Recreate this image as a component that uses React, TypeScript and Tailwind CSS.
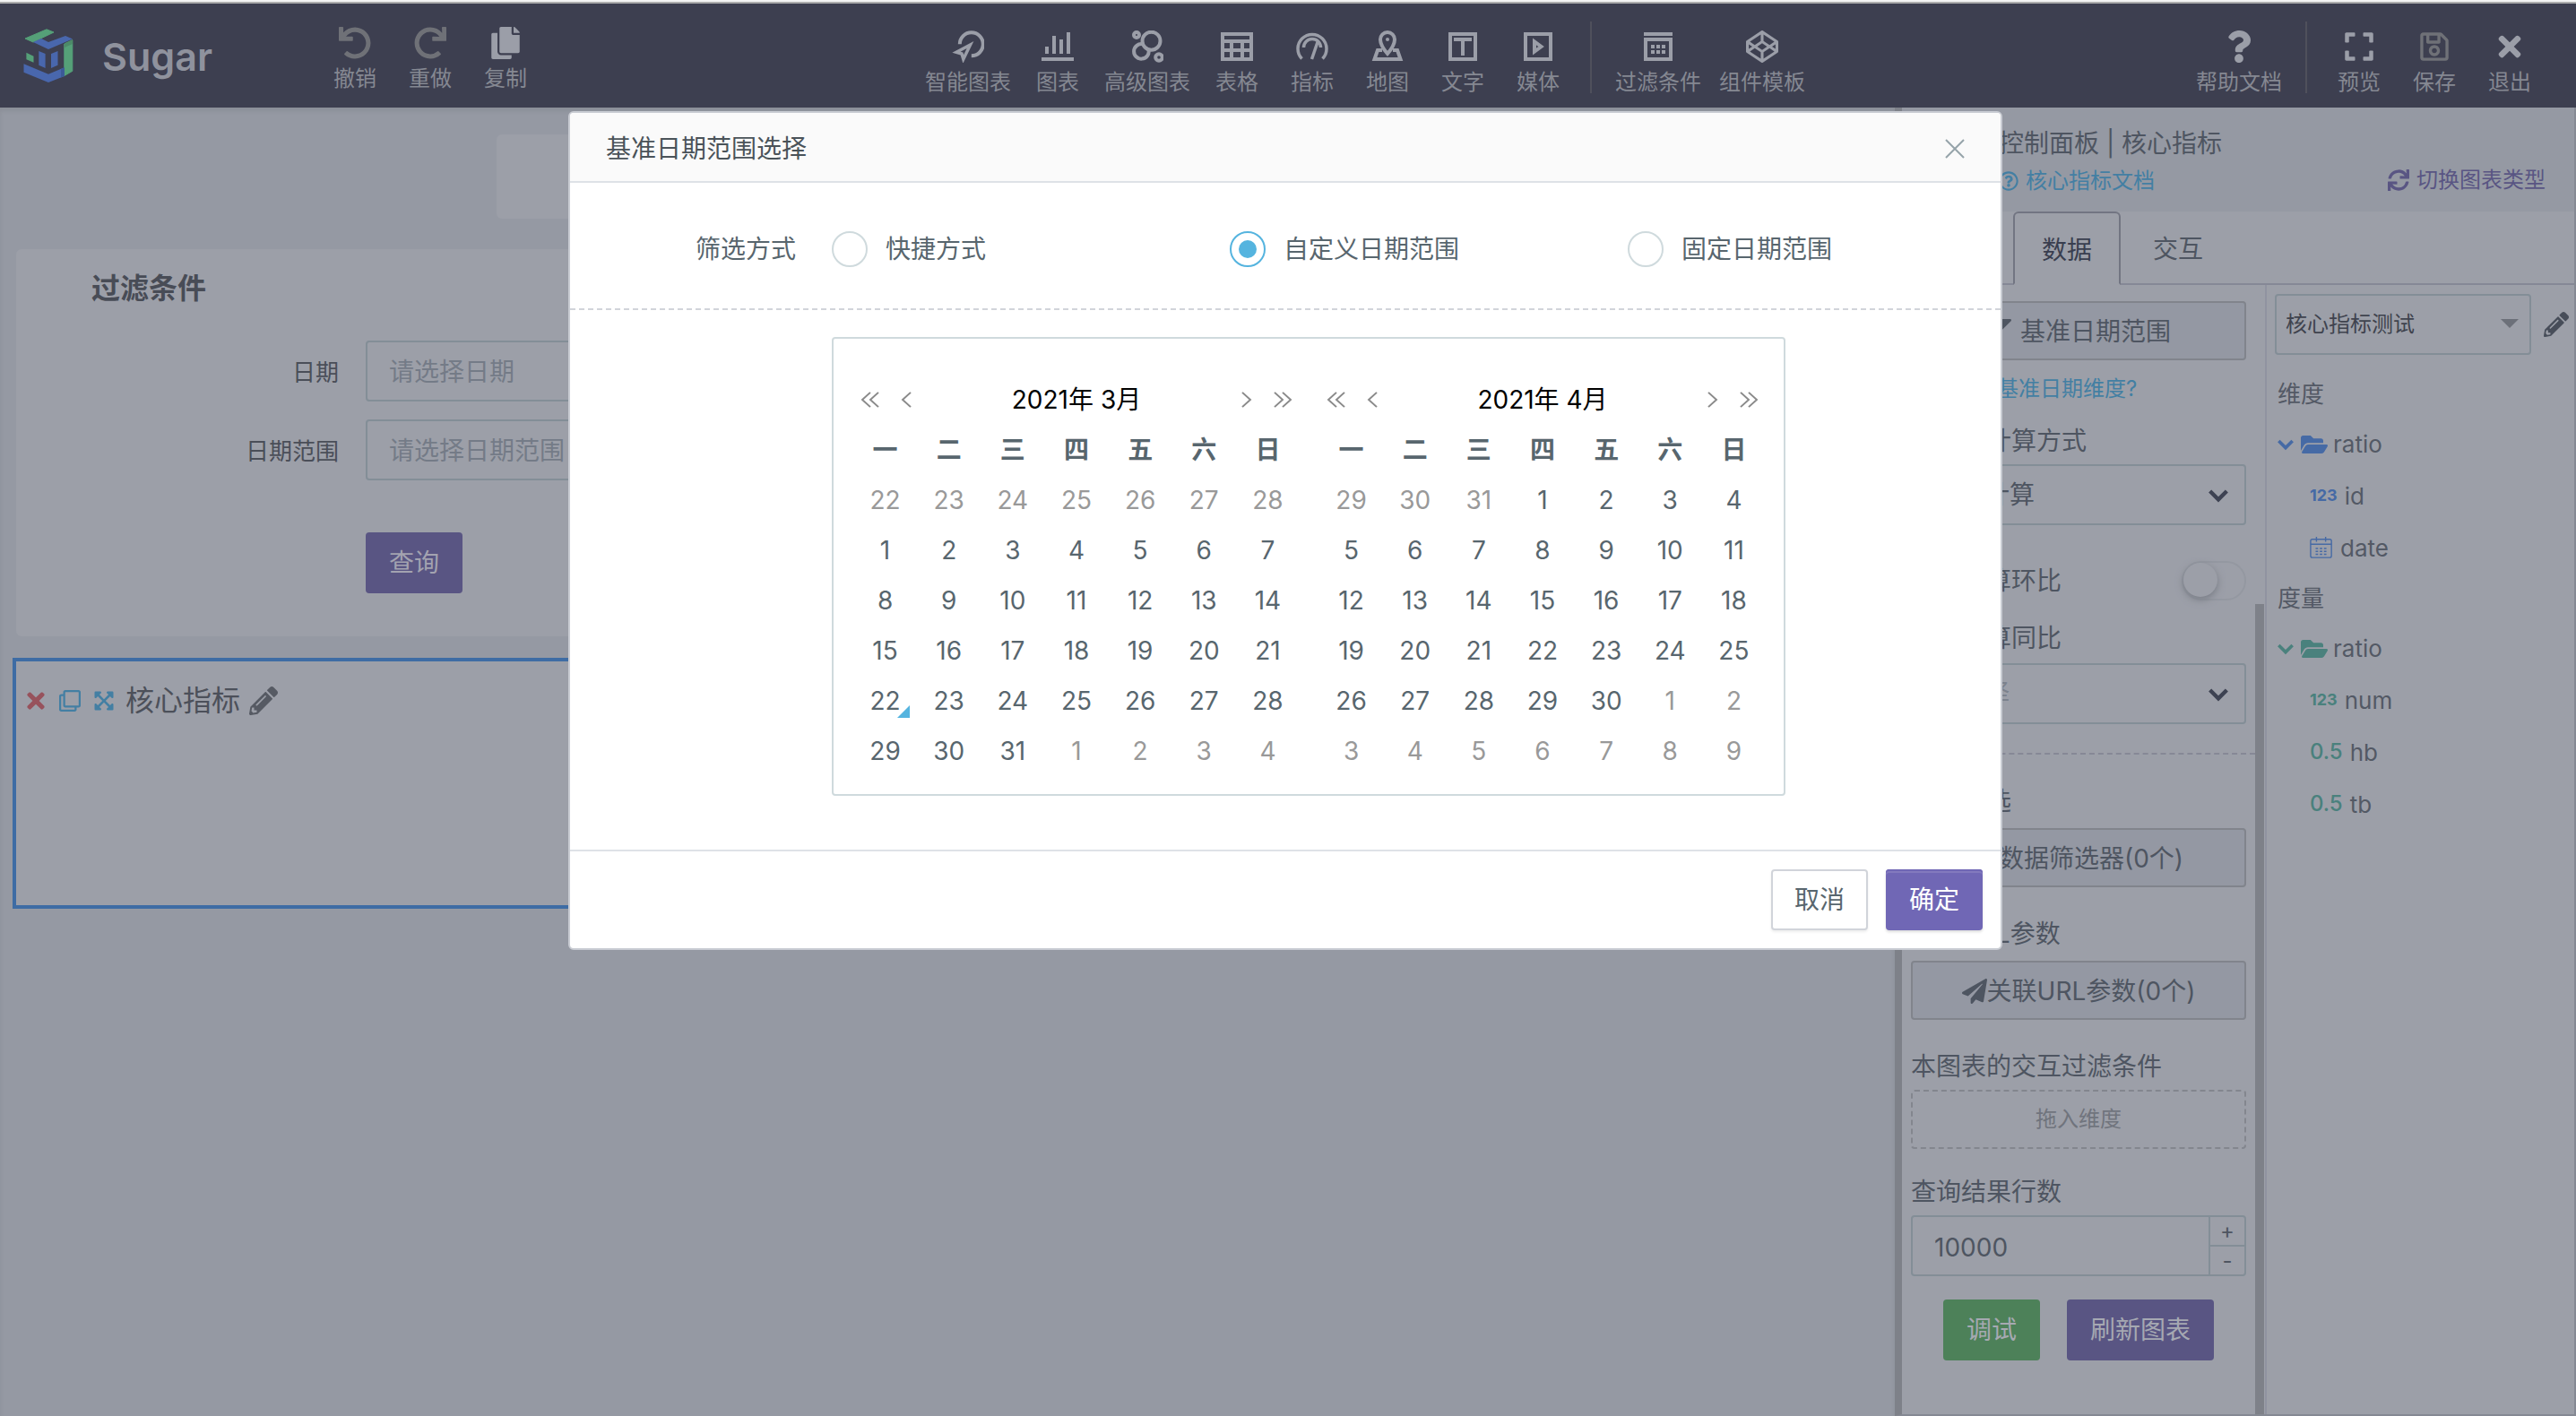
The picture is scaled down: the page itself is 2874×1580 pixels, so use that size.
import React from 'react';
import {
  FaCodepen,
  FaCopy,
  FaExpand,
  FaExpandArrowsAlt,
  FaFilter,
  FaFolderOpen,
  FaPaperPlane,
  FaPencilAlt,
  FaQuestion,
  FaRedo,
  FaRegClone,
  FaRegQuestionCircle,
  FaRegSave,
  FaSync,
  FaTimes,
  FaUndo,
} from 'react-icons/fa';

type Kids = { children?: React.ReactNode };

/* ---------- drawings ---------- */

function Logo() {
  return (
    <svg width="56" height="60" viewBox="0 0 56 60" aria-hidden="true">
      <g strokeLinejoin="round" strokeWidth="1">
        <path d="M2 11 26 .8l8 3.2-23 11z" fill="#55a078" stroke="#55a078" />
        <path d="M11 15l9-4 8 4 19-7 8 3.500L28 23z" fill="#4967ad" />
        <path d="M45.800 17l9-4.200v34.500l-9 5.200z" fill="#55a078" stroke="#55a078" />
        <path d="M46 16.500l9-4.500v5l-9 4z" fill="#4c8a68" />
        <path d="M3.400 26.700l8.100 4v7l-8.100-3.400z" fill="#55a078" />
        <path d="M17.300 25l7.300 3v16l-7.300-3.300zM38.500 25L31 28v16l7.500-3.300z" fill="#4967ad" />
        <path d="M.5 39.300L28 50.700l17.800-7.400V53L28 60 .5 48.700z" fill="#4967ad" />
        <path d="M42 45l3.800-1.700V53L42 54.500z" fill="#3b5a96" />
      </g>
    </svg>
  );
}

function Svg({ children }: Kids) {
  return (
    <svg width="36" height="36" viewBox="0 0 36 36" fill="none" stroke="currentColor" strokeWidth="4" aria-hidden="true">
      {children}
    </svg>
  );
}

const SmartIcon = () => (
  <Svg>
    <path d="M8.800 15.300A13 13 0 1 1 21.800 28.300" />
    <path d="M20.500 16L5 24.300l6 1.700 1.800 6z" strokeWidth="3.500" />
  </Svg>
);
const ChartIcon = () => (
  <Svg>
    <path d="M6 18v8M14 6v20M22 10v16M30 2v24M0 32h36" />
  </Svg>
);
const AdvancedIcon = () => (
  <Svg>
    <circle cx="6" cy="5" r="3" />
    <circle cx="22.500" cy="11.700" r="10" />
    <path d="M13 15.200A8.300 8.300 0 1 0 19.500 21.500" />
    <circle cx="31" cy="30" r="3.800" />
  </Svg>
);
const TableIcon = () => (
  <Svg>
    <path
      stroke="none"
      fill="currentColor"
      fillRule="evenodd"
      d="M0 2h36v32H0zM4 6v4h28V6zM4 14v6h6v-6zM14 14v6h8v-6zM26 14v6h6v-6zM4 24v6h6v-6zM14 24v6h8v-6zM26 24v6h6v-6z"
    />
  </Svg>
);
const GaugeIcon = () => (
  <Svg>
    <path d="M6.500 31.500A16 16 0 1 1 29.500 31.500" strokeWidth="3.500" />
    <path d="M8.500 19a9.500 9.500 0 0 1 19 0" strokeWidth="3.500" />
    <path d="M17.500 32L24 13" strokeWidth="3.500" />
  </Svg>
);
const MapIcon = () => (
  <Svg>
    <path d="M18 26C12 19 10 15 10 10a8 8 0 0 1 16 0c0 5-2 9-8 16z" />
    <circle cx="18" cy="10" r="2" fill="currentColor" stroke="none" />
    <path d="M12 22H7L3.500 32h29L29 22h-5" />
  </Svg>
);
const TextIcon = () => (
  <Svg>
    <path d="M4 4h28v28H4zM8 10h20M18 10v18" />
  </Svg>
);
const MediaIcon = () => (
  <Svg>
    <path d="M4 4h28v28H4z" />
    <path d="M14 12.500v11l7.500-5.500z" />
  </Svg>
);
const FilterFormIcon = () => (
  <Svg>
    <path d="M2 4h32M4 10h28v22H4zM10 18h4M16 18h4M22 18h4M10 24h4M16 24h4M22 24h4" />
  </Svg>
);

function Chevron({ size }: { size: number }) {
  return (
    <svg width={size} height={size} viewBox="0 0 20 20" fill="none" stroke="currentColor" strokeWidth="4" aria-hidden="true">
      <path d="M1.500 5.500L10 14l8.500-8.500" />
    </svg>
  );
}

function CalendarGlyph() {
  return (
    <svg width="26" height="28" viewBox="0 0 28 28" fill="none" stroke="currentColor" strokeWidth="1.500" aria-hidden="true">
      <rect x="1" y="4" width="25" height="22" rx="2" />
      <path d="M1 10h25M8 1v6M19 1v6" />
      <path d="M7 15h14M7 18.500h14M7 22h14" strokeDasharray="3 2" />
    </svg>
  );
}

function Arrow({ dir, double }: { dir: 'left' | 'right'; double?: boolean }) {
  const left = double ? 'M11 2L2 11l9 9M20 2l-9 9 9 9' : 'M12 2L3 11l9 9';
  const right = double ? 'M2 2l9 9-9 9M11 2l9 9-9 9' : 'M2 2l9 9-9 9';
  return (
    <svg width={double ? 22 : 14} height="20" viewBox={double ? '0 0 22 22' : '0 0 14 22'} preserveAspectRatio="none" fill="none" stroke="currentColor" strokeWidth="2" aria-hidden="true">
      <path d={dir === 'left' ? left : right} />
    </svg>
  );
}

/* ---------- top bar ---------- */

function Tool({ icon, label, muted }: { icon: React.ReactNode; label: string; muted?: boolean }) {
  return (
    <button type="button" className="flex min-w-21 flex-col items-center gap-1 px-2.5 pt-4 text-2xl leading-9 text-[#858892]">
      <span className={muted ? 'flex h-9 items-center text-[#6f7177]' : 'flex h-9 items-center text-[#9b9ea8]'}>{icon}</span>
      {label}
    </button>
  );
}

const Divider = () => <span className="mx-4 h-20 w-0.5 bg-[#4f505b]" />;

function TopBar() {
  return (
    <header className="flex h-29 items-center justify-between bg-[#3d3f50] pr-8 pl-6.5">
      <div className="flex items-center">
        <Logo />
        <span className="ml-8 w-60 pt-0.5 text-[43px] leading-none font-semibold text-[#8f929d]">Sugar</span>
        <div className="flex pb-1">
          <Tool icon={<FaUndo size={36} />} label="撤销" muted />
          <Tool icon={<FaRedo size={36} />} label="重做" muted />
          <Tool icon={<FaCopy size={36} />} label="复制" />
        </div>
      </div>
      <nav className="flex items-center pt-1">
        <Tool icon={<SmartIcon />} label="智能图表" />
        <Tool icon={<ChartIcon />} label="图表" />
        <Tool icon={<AdvancedIcon />} label="高级图表" />
        <Tool icon={<TableIcon />} label="表格" />
        <Tool icon={<GaugeIcon />} label="指标" />
        <Tool icon={<MapIcon />} label="地图" />
        <Tool icon={<TextIcon />} label="文字" />
        <Tool icon={<MediaIcon />} label="媒体" />
        <Divider />
        <Tool icon={<FilterFormIcon />} label="过滤条件" />
        <Tool icon={<FaCodepen size={36} />} label="组件模板" />
      </nav>
      <div className="flex items-center pt-1">
        <Tool icon={<FaQuestion size={36} />} label="帮助文档" />
        <Divider />
        <Tool icon={<FaExpand size={36} />} label="预览" />
        <Tool icon={<FaRegSave size={36} />} label="保存" muted />
        <Tool icon={<FaTimes size={36} />} label="退出" />
      </div>
    </header>
  );
}

/* ---------- canvas ---------- */

function FilterField({ id, label, placeholder }: { id: string; label: string; placeholder: string }) {
  return (
    <div className="mb-5 flex items-center">
      <label htmlFor={id} className="w-90 pt-0.5 pr-7.5 text-right text-[26px] text-[#4a4e58]">
        {label}
      </label>
      <input
        id={id}
        placeholder={placeholder}
        className="h-17 w-120 rounded border-2 border-[#838e97] bg-transparent px-6 pt-0.5 text-[28px] placeholder:text-[#747b87]"
      />
    </div>
  );
}

function Canvas() {
  return (
    <main className="flex-1 shadow-[inset_0_4px_4px_#8b8f98]">
      <div className="mx-auto mt-7.5 h-23.5 w-[1006px] rounded-md bg-[#9c9fa8]" />
      <section className="mx-4.5 mt-8.5 h-108 rounded-md bg-[#9c9fa8] pt-6">
        <h2 className="ml-21 text-[32px] leading-10 font-bold text-[#484c56]">过滤条件</h2>
        <form className="mt-9.5 pl-[30px]">
          <FilterField id="date" label="日期" placeholder="请选择日期" />
          <FilterField id="range" label="日期范围" placeholder="请选择日期范围" />
          <button type="button" className="mt-9.5 ml-90 h-17 w-27 rounded bg-[#595583] text-[28px] text-[#a3a3b0]">
            查询
          </button>
        </form>
      </section>
      <section className="mx-3.5 mt-6 h-70 border-4 border-[#3e6ca4] bg-[#9c9fa8]">
        <div className="flex items-center pt-6 pl-2">
          <FaTimes size={28} className="text-[#97525c]" />
          <FaRegClone size={24} className="ml-3 text-[#437fa3]" />
          <FaExpandArrowsAlt size={24} className="ml-3.5 text-[#437fa3]" />
          <h2 className="ml-3 text-[32px] leading-10 text-[#4c505a]">核心指标</h2>
          <FaPencilAlt size={32} className="ml-2.5 text-[#565a63]" />
        </div>
      </section>
    </main>
  );
}

/* ---------- right panel ---------- */

const FieldLabel = ({ children, htmlFor }: Kids & { htmlFor?: string }) => (
  <label htmlFor={htmlFor} className="block leading-10">
    {children}
  </label>
);

function PanelButton({ icon, children }: Kids & { icon: React.ReactNode }) {
  return (
    <button type="button" className="flex h-16.5 w-full items-center justify-center rounded border-2 border-[#81848c] bg-[#9498a3] pt-0.5">
      {icon}
      {children}
    </button>
  );
}

function PanelSelect({ id, value, muted }: { id: string; value: string; muted?: boolean }) {
  return (
    <div className="relative">
      <select
        id={id}
        className={
          muted
            ? 'h-17 w-full appearance-none rounded border-2 border-[#838e97] bg-transparent px-6 text-[#7c828d]'
            : 'h-17 w-full appearance-none rounded border-2 border-[#838e97] bg-transparent px-6'
        }
      >
        <option>{value}</option>
      </select>
      <span className="pointer-events-none absolute top-6 right-5 text-[#3d4252]">
        <Chevron size={22} />
      </span>
    </div>
  );
}

function DataSettings() {
  return (
    <div className="w-98.5 px-2.5 pt-4.5">
      <PanelButton icon={<FaFilter size={28} className="mr-2.5" />}>基准日期范围</PanelButton>
      <a href="#base-date" className="mt-3 block text-2xl leading-10 text-[#437fa3]">
        如何设置基准日期维度?
      </a>
      <div className="mt-4.5 mb-1.5">
        <FieldLabel htmlFor="calc">环同比计算方式</FieldLabel>
      </div>
      <PanelSelect id="calc" value="自动计算" />
      <div className="mt-10 flex h-11 items-center justify-between">
        <FieldLabel htmlFor="hb">是否计算环比</FieldLabel>
        <input
          id="hb"
          type="checkbox"
          role="switch"
          className="h-11 w-18 appearance-none rounded-full border-2 border-[#9498a1] before:block before:size-9.5 before:rounded-full before:bg-[#9c9fa8] before:shadow-[0_3px_8px_#777b84] before:content-['']"
        />
      </div>
      <div className="mt-5.5 mb-2">
        <FieldLabel htmlFor="tb">是否计算同比</FieldLabel>
      </div>
      <PanelSelect id="tb" value="请选择" muted />
      <hr className="-mx-2.5 mt-8 mb-8 border-t-2 border-dashed border-[#868896]" />
      <div className="pb-2.5">
        <FieldLabel>数据筛选</FieldLabel>
      </div>
      <PanelButton icon={<FaFilter size={24} className="mr-1" />}>数据筛选器(0个)</PanelButton>
      <div className="mt-8 mb-2.5">
        <FieldLabel>关联URL参数</FieldLabel>
      </div>
      <PanelButton icon={<FaPaperPlane size={28} />}>关联URL参数(0个)</PanelButton>
      <div className="mt-8 mb-1.5">
        <FieldLabel>本图表的交互过滤条件</FieldLabel>
      </div>
      <div className="flex h-16.5 items-center justify-center rounded-sm border-2 border-dashed border-[#83868e] text-2xl text-[#70747d]">
        拖入维度
      </div>
      <div className="mt-7 mb-1.5">
        <FieldLabel htmlFor="rows">查询结果行数</FieldLabel>
      </div>
      <div className="flex h-17 rounded border-2 border-[#838e97]">
        <input id="rows" defaultValue="10000" className="min-w-0 flex-1 bg-transparent px-6 pt-1" />
        <div className="flex w-10 flex-col border-l-2 border-[#838e97] text-2xl leading-7">
          <button type="button" aria-label="增加" className="flex-1 border-b-2 border-[#838e97]">
            +
          </button>
          <button type="button" aria-label="减少" className="flex-1">
            -
          </button>
        </div>
      </div>
      <div className="mt-6.5 flex justify-center gap-7.5 text-[#a6a9b2]">
        <button type="button" className="h-17 rounded bg-[#4d8159] px-6.5">
          调试
        </button>
        <button type="button" className="h-17 rounded bg-[#595583] px-6.5">
          刷新图表
        </button>
      </div>
    </div>
  );
}

function Folder({ tone }: { tone: string }) {
  return (
    <div className={`${tone} flex h-14 items-center leading-9`}>
      <Chevron size={18} />
      <FaFolderOpen size={30} className="ml-2" />
      <span className="ml-1.5 text-[#535965]">ratio</span>
    </div>
  );
}

const IntMark = ({ tone }: { tone: string }) => <span className={`${tone} mr-2 text-lg font-bold`}>123</span>;
const DecMark = () => <span className="mr-2 text-2xl font-medium text-[#4a817d]">0.5</span>;

const Leaf = ({ children }: Kids) => <div className="flex h-14.5 items-center pl-9">{children}</div>;

function Dataset() {
  const blue = 'text-[#466aa5]';
  const green = 'text-[#4a817d]';
  return (
    <div className="flex-1 border-l-2 border-[#9093a0] pt-2.5 pl-2 text-[26px] text-[#535965]">
      <div className="flex items-center">
        <div className="relative ml-px w-71.5">
          <select
            aria-label="数据模型"
            className="h-17 w-full appearance-none rounded border-2 border-[#838e97] bg-transparent px-2.5 text-2xl text-[#3f434e]"
          >
            <option>核心指标测试</option>
          </select>
          <span className="pointer-events-none absolute top-7 right-3.5 border-x-10 border-t-10 border-x-transparent border-t-[#6c7079]" />
        </div>
        <FaPencilAlt size={28} className="ml-3.5 text-[#474d59]" />
      </div>
      <div className="pl-1">
        <h3 className="mt-6 leading-10">维度</h3>
        <div className="mt-2">
          <Folder tone={blue} />
          <Leaf>
            <IntMark tone={blue} />
            id
          </Leaf>
          <Leaf>
            <span className="mr-2 text-[#466aa5]">
              <CalendarGlyph />
            </span>
            date
          </Leaf>
        </div>
        <h3 className="mt-2 leading-10">度量</h3>
        <div className="mt-2">
          <Folder tone={green} />
          <Leaf>
            <IntMark tone={green} />
            num
          </Leaf>
          <Leaf>
            <DecMark />
            hb
          </Leaf>
          <Leaf>
            <DecMark />
            tb
          </Leaf>
        </div>
      </div>
    </div>
  );
}

function Tab({ children, active }: Kids & { active?: boolean }) {
  return (
    <button
      type="button"
      role="tab"
      aria-selected={!!active}
      className={
        active
          ? 'relative -mb-0.5 rounded-t-md border-2 border-[#727582] border-b-[#9c9fa8] bg-[#9c9fa8] px-7.5 pt-1 text-[#393e4f]'
          : 'px-8 pt-1'
      }
    >
      {children}
    </button>
  );
}

function SidePanel() {
  return (
    <aside className="flex w-[760px] flex-col border-r-2 border-b-2 border-l-8 border-[#858993] border-l-[#7e8189] bg-[#9c9fa8] text-[28px] text-[#4e5561]">
      <div className="h-29 bg-[#9599a3] pt-5 pr-8 pl-13">
        <h2 className="leading-10">图表控制面板 | 核心指标</h2>
        <div className="flex items-center justify-between pl-14 text-2xl leading-9">
          <a href="#doc" className="flex items-center gap-2 pt-1 text-[#437fa3]">
            <FaRegQuestionCircle size={22} />
            核心指标文档
          </a>
          <a href="#switch" className="flex items-center gap-2 pt-0.5 text-[#595583]">
            <FaSync size={24} />
            切换图表类型
          </a>
        </div>
      </div>
      <div role="tablist" className="flex h-20.5 gap-1 border-b-2 border-[#858896]">
        <Tab>基础</Tab>
        <Tab active>数据</Tab>
        <Tab>交互</Tab>
      </div>
      <div className="flex flex-1">
        <DataSettings />
        <div className="mr-px w-2.5 pt-89">
          <div className="h-full bg-[#7e8189]" />
        </div>
        <Dataset />
      </div>
    </aside>
  );
}

/* ---------- dialog ---------- */

const WEEK = ['一', '二', '三', '四', '五', '六', '日'];

function buildWeeks(lead: number[], length: number) {
  const cells = lead.map((d) => ({ d, off: true }));
  for (let d = 1; d <= length; d++) cells.push({ d, off: false });
  for (let d = 1; cells.length < 42; d++) cells.push({ d, off: true });
  return [0, 1, 2, 3, 4, 5].map((w) => cells.slice(w * 7, w * 7 + 7));
}

function Month({ title, lead, length, today }: { title: string; lead: number[]; length: number; today?: number }) {
  return (
    <div className="flex-1">
      <div className="flex h-14 items-center justify-between px-2">
        <div className="flex gap-5.5 text-[#8a8a8a]">
          <button type="button" aria-label="上一年">
            <Arrow dir="left" double />
          </button>
          <button type="button" aria-label="上个月">
            <Arrow dir="left" />
          </button>
        </div>
        <span className="text-black">{title}</span>
        <div className="flex gap-5.5 text-[#8a8a8a]">
          <button type="button" aria-label="下个月">
            <Arrow dir="right" />
          </button>
          <button type="button" aria-label="下一年">
            <Arrow dir="right" double />
          </button>
        </div>
      </div>
      <table className="w-full table-fixed text-center">
        <thead>
          <tr className="h-14">
            {WEEK.map((w) => (
              <th key={w} className="p-0 font-bold">
                {w}
              </th>
            ))}
          </tr>
        </thead>
        <tbody>
          {buildWeeks(lead, length).map((week, i) => (
            <tr key={i} className="h-14">
              {week.map((c) => (
                <td key={c.d} className="p-0">
                  <button type="button" className={c.off ? 'relative h-10 w-13.5 text-[#999999]' : 'relative h-10 w-13.5'}>
                    {c.d}
                    {!c.off && c.d === today && (
                      <span className="absolute right-0 bottom-0 border-b-14 border-l-14 border-b-[#55b4df] border-l-transparent" />
                    )}
                  </button>
                </td>
              ))}
            </tr>
          ))}
        </tbody>
      </table>
    </div>
  );
}

function Mode({ label, checked }: { label: string; checked?: boolean }) {
  return (
    <label className="flex w-111 shrink-0 items-center gap-5">
      <input
        type="radio"
        name="mode"
        defaultChecked={checked}
        className="grid size-10 appearance-none place-content-center rounded-full border-2 border-[#cfdadd] before:size-5 before:rounded-full before:content-[''] checked:border-[#55b4df] checked:before:bg-[#55b4df]"
      />
      {label}
    </label>
  );
}

function DateRangeDialog() {
  return (
    <div className="absolute inset-0 flex items-start justify-center pt-31 pr-1.5">
      <div
        role="dialog"
        aria-label="基准日期范围选择"
        className="w-400 rounded-md border-2 border-[#c9ccd3] bg-white text-[28px] text-[#58666e]"
      >
        <div className="flex h-19.5 items-center justify-between rounded-t border-b-2 border-[#dee2e7] bg-[#fafafa] pt-1 pr-10 pl-10 text-[#4a5359]">
          <h1>基准日期范围选择</h1>
          <button type="button" aria-label="关闭" className="text-[#95a3a9]">
            <svg width="22" height="22" viewBox="0 0 22 22" stroke="currentColor" strokeWidth="2" aria-hidden="true">
              <path d="M1 1l20 20M21 1L1 21" />
            </svg>
          </button>
        </div>
        <fieldset className="flex h-35 items-center overflow-hidden pt-2 pl-35">
          <span className="mr-10 shrink-0">筛选方式</span>
          <Mode label="快捷方式" />
          <Mode label="自定义日期范围" checked />
          <Mode label="固定日期范围" />
        </fieldset>
        <div className="border-t-2 border-dashed border-[#d1d4da] pt-7.5 pb-15">
          <div className="ml-73 flex h-128 w-266 gap-5.5 rounded border-2 border-[#cfdadd] pt-10 pr-5 pl-5.5">
            <Month title="2021年 3月" lead={[22, 23, 24, 25, 26, 27, 28]} length={31} today={22} />
            <Month title="2021年 4月" lead={[29, 30, 31]} length={30} />
          </div>
        </div>
        <div className="flex justify-end gap-5 border-t-2 border-[#dee2e7] px-5 py-5">
          <button type="button" className="h-17 w-27 rounded border-2 border-[#d1d4da] bg-white shadow-[0_2px_3px_#eeeeee]">
            取消
          </button>
          <button
            type="button"
            className="h-17 w-27 rounded bg-[#7067b5] text-white shadow-[0_2px_3px_#dddddd,inset_0_2px_0_#7067b5,inset_0_4px_0_#8279be]"
          >
            确定
          </button>
        </div>
      </div>
    </div>
  );
}

export default function App() {
  return (
    <div className="relative flex min-h-screen flex-col bg-[#9599a3] font-['Inter','Noto_Sans_CJK_SC',sans-serif]">
      <div className="h-1 border-b-2 border-[#adadad] bg-[#f3f3f3]" />
      <TopBar />
      <div className="flex flex-1">
        <Canvas />
        <SidePanel />
      </div>
      <DateRangeDialog />
    </div>
  );
}
